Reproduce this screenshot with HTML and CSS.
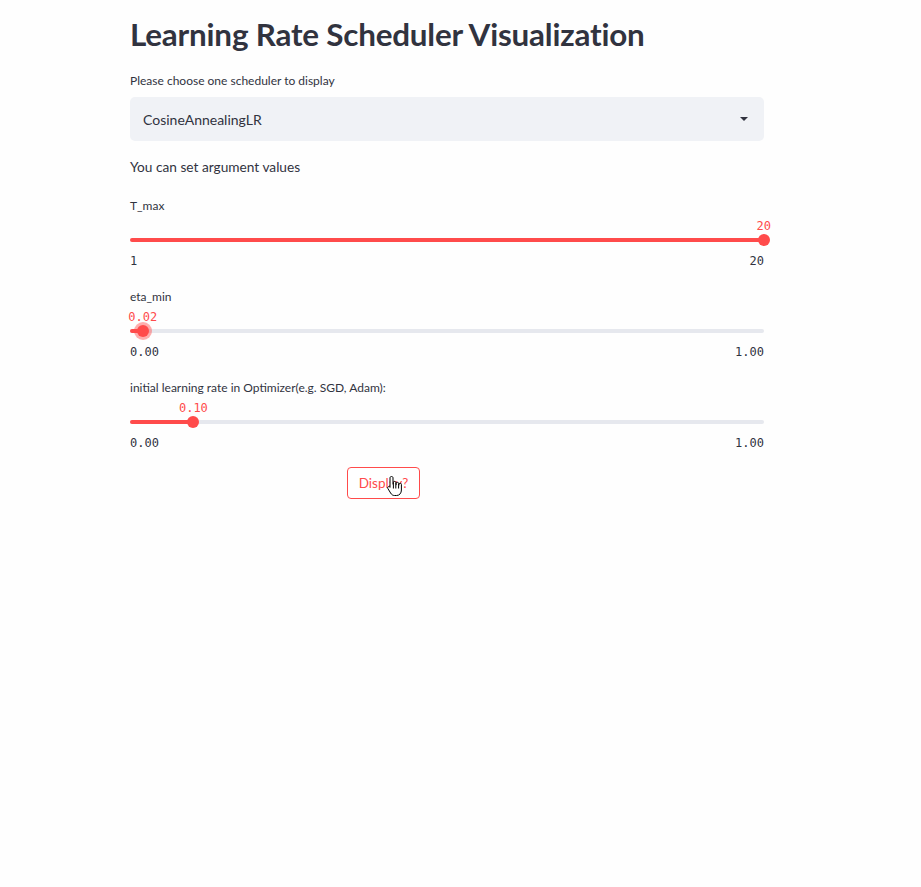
FILE: index.html
```html
<!DOCTYPE html>
<html>
<head>
<meta charset="utf-8">
<link rel="stylesheet" href="styles.css">
</head>
<body>
<main class="main">
  <h1 class="title">Learning Rate Scheduler Visualization</h1>

  <div class="widget">
    <div class="label">Please choose one scheduler to display</div>
    <div class="select">
      <span class="select-value">CosineAnnealingLR</span>
      <svg class="caret" width="10" height="6" viewBox="0 0 10 6"><path d="M1 1h8L5 5z" fill="#31333f"/></svg>
    </div>
  </div>

  <p class="text">You can set argument values</p>

  <div class="widget slider-widget">
    <div class="label">T_max</div>
    <div class="slider">
      <div class="track"><div class="fill" style="width:100%"></div></div>
      <div class="thumb" style="left:100%"><span class="thumb-value end">20</span></div>
    </div>
    <div class="ticks"><span>1</span><span>20</span></div>
  </div>

  <div class="widget slider-widget">
    <div class="label">eta_min</div>
    <div class="slider">
      <div class="track"><div class="fill" style="width:2%"></div></div>
      <div class="thumb focused" style="left:2%"><span class="thumb-value">0.02</span></div>
    </div>
    <div class="ticks"><span>0.00</span><span>1.00</span></div>
  </div>

  <div class="widget slider-widget">
    <div class="label">initial learning rate in Optimizer(e.g. SGD, Adam):</div>
    <div class="slider">
      <div class="track"><div class="fill" style="width:10%"></div></div>
      <div class="thumb" style="left:10%"><span class="thumb-value">0.10</span></div>
    </div>
    <div class="ticks"><span>0.00</span><span>1.00</span></div>
  </div>

  <div class="columns">
    <div class="column"></div>
    <div class="column">
      <button class="button">Display?
        <svg class="cursor" width="18" height="22" viewBox="0 0 18 22">
          <path d="M5.5 1.5C6.5 1.5 7 2 7 3V9.5H7.4V7.6C7.4 6.8 7.9 6.4 8.6 6.4C9.3 6.4 9.8 6.8 9.8 7.6V9.8H10.2V8.4C10.2 7.7 10.7 7.3 11.4 7.3C12.1 7.3 12.6 7.7 12.6 8.4V10.3H13V9.3C13 8.6 13.5 8.2 14.2 8.2C14.9 8.2 15.4 8.6 15.4 9.3V15C15.4 18 13.6 20.5 10.6 20.5H8.6C6.6 20.5 5.6 19.6 4.6 18L1.9 13.6C1.4 12.8 1.6 12 2.3 11.7C3 11.4 3.6 11.7 4 12.3V3C4 2 4.5 1.5 5.5 1.5Z" fill="#fff" stroke="#000" stroke-width="1" stroke-linejoin="round"/>
          <path d="M7.4 9.5V13.5M9.8 9.8V13.5M12.6 10.3V13.5" stroke="#000" stroke-width="1"/>
        </svg>
      </button>
    </div>
    <div class="column"></div>
  </div>
</main>
</body>
</html>
```
FILE: styles.css
```css
html, body {
  margin: 0;
  padding: 0;
  background: #fefefe;
}
body {
  font-family: "Lato", "Open Sans", sans-serif;
  color: #31333f;
}
.main {
  width: 634px;
  margin-left: 130px;
  padding-top: 14px;
}
.title {
  margin: 0;
  font-size: 31.4px;
  font-weight: 700;
  line-height: 40px;
  letter-spacing: -0.2px;
}
.label {
  font-size: 12px;
  line-height: 16px;
  height: 16px;
}
.title + .widget {
  margin-top: 19px;
}
.title + .widget .label {
  margin-bottom: 8px;
}
.select {
  height: 44px;
  background: #f0f2f6;
  border-radius: 5px;
  display: flex;
  align-items: center;
  justify-content: space-between;
  padding: 0 15px 0 13px;
  box-sizing: border-box;
}
.select-value {
  font-size: 14px;
}
.text {
  margin: 17px 0 0;
  font-size: 13.7px;
  line-height: 18px;
}
.slider-widget {
  margin-top: 21px;
}
.text + .slider-widget {
  margin-top: 22px;
}
.slider {
  position: relative;
  height: 39px;
}
.track {
  position: absolute;
  left: 0;
  right: 0;
  top: 24px;
  height: 4px;
  border-radius: 2px;
  background: #e6e8ee;
  overflow: hidden;
}
.fill {
  height: 100%;
  background: #ff4b4b;
}
.thumb {
  position: absolute;
  top: 20px;
  width: 12px;
  height: 12px;
  margin-left: -6px;
  border-radius: 50%;
  background: #ff4b4b;
}
.thumb.focused {
  box-shadow: 0 0 0 3px rgba(255, 75, 75, 0.45);
}
.thumb-value {
  position: absolute;
  bottom: 13px;
  left: 50%;
  transform: translateX(-50%);
  font-family: "DejaVu Sans Mono", monospace;
  font-size: 12px;
  line-height: 14px;
  color: #ff4b4b;
  white-space: nowrap;
}
.thumb-value.end {
  left: auto;
  right: -1px;
  transform: none;
}
.ticks {
  display: flex;
  justify-content: space-between;
  font-family: "DejaVu Sans Mono", monospace;
  font-size: 12px;
  line-height: 14px;
  margin-top: 1px;
}
.columns {
  display: flex;
  gap: 16px;
  margin-top: 17px;
}
.column {
  flex: 1;
}
.button {
  position: relative;
  font-family: "Lato", sans-serif;
  font-size: 13.5px;
  color: #ff4b4b;
  background: #fff;
  border: 1px solid #ff4b4b;
  border-radius: 4px;
  height: 32px;
  padding: 0 11px;
  line-height: 30px;
}
.cursor {
  position: absolute;
  left: 38px;
  top: 7px;
}
```
